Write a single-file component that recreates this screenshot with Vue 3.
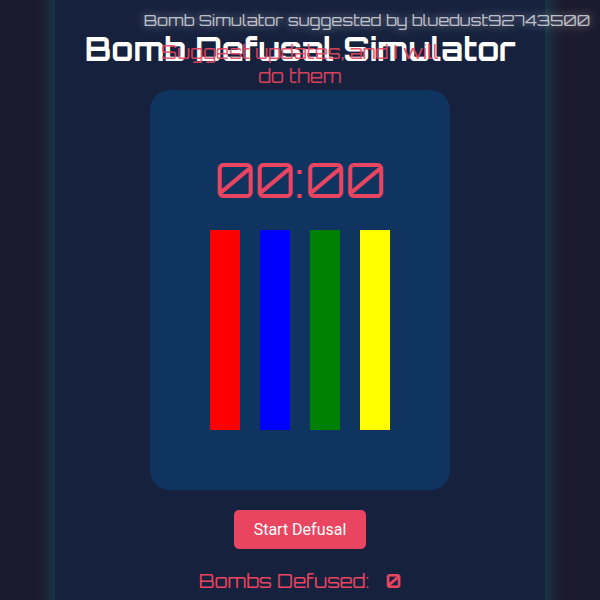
<script setup>
import { ref } from 'vue'

const wires = ref([
  { color: 'red', cut: false },
  { color: 'blue', cut: false },
  { color: 'green', cut: false },
  { color: 'yellow', cut: false },
])
const timer = ref('00:00')
const defused = ref(0)
</script>

<template>
  <div class="page">
    <p class="credit">Bomb Simulator suggested by bluedust92743500</p>
    <main class="game">
      <h1 class="title">Bomb Defusal Simulator</h1>
      <section class="bomb">
        <p class="notice">Suggest updates, and I will do them</p>
        <div class="timer">{{ timer }}</div>
        <div class="wires">
          <button
            v-for="wire in wires"
            :key="wire.color"
            type="button"
            class="wire"
            :class="wire.color"
            :aria-label="wire.color"
          ></button>
        </div>
      </section>
      <button type="button" class="start">Start Defusal</button>
      <p class="score">
        <span>Bombs Defused:</span>
        <strong class="count">{{ defused }}</strong>
      </p>
    </main>
  </div>
</template>

<style>
body {
  margin: 0;
  background: #1c1a2d;
}
</style>

<style scoped>
.page {
  position: relative;
  display: flex;
  justify-content: center;
  height: 100vh;
  overflow: hidden;
  background: #1c1a2d;
  font-family: Orbitron, "DejaVu Sans", sans-serif;
  color: #fff;
}

.credit {
  position: absolute;
  top: 8px;
  right: 10px;
  z-index: 2;
  margin: 0;
  font-size: 16px;
  line-height: 24px;
  white-space: nowrap;
  color: rgba(255, 255, 255, 0.7);
  text-shadow: 0 0 10px rgba(255, 255, 255, 0.5);
}

.game {
  display: flex;
  flex-direction: column;
  align-items: center;
  flex: 0 1 490px;
  box-sizing: border-box;
  margin: -40px 0;
  padding: 68px 20px 40px;
  background: #16213e;
  box-shadow: 0 0 20px rgba(0, 255, 255, 0.25);
}

.title {
  margin: 0 0 20px;
  font-size: 32px;
  font-weight: 700;
  line-height: 42px;
  white-space: nowrap;
}

.bomb {
  position: relative;
  display: flex;
  flex-direction: column;
  align-items: center;
  justify-content: center;
  gap: 20px;
  flex: none;
  width: 300px;
  height: 400px;
  border-radius: 20px;
  background: #0f3460;
}

.notice {
  position: absolute;
  bottom: 100%;
  left: 0;
  width: 100%;
  margin: 0 0 2px;
  font-size: 19px;
  line-height: 24px;
  text-align: center;
  color: #e94560;
  opacity: 0.9;
}

.timer {
  font-size: 48px;
  line-height: 60px;
  color: #e94560;
}

.wires {
  display: flex;
  gap: 20px;
}

.wire {
  width: 30px;
  height: 200px;
  padding: 0;
  border: 0;
  cursor: pointer;
}

.red {
  background: #f00;
}

.blue {
  background: #00f;
}

.green {
  background: #008000;
}

.yellow {
  background: #ff0;
}

.start {
  margin: 20px 0;
  padding: 10px 20px;
  border: 0;
  border-radius: 5px;
  background: #e94560;
  font-family: Roboto, sans-serif;
  font-size: 16px;
  line-height: 19px;
  color: #fff;
  cursor: pointer;
}

.score {
  display: flex;
  align-items: center;
  gap: 16px;
  margin: 0;
  font-size: 19px;
  line-height: 24px;
  color: #e94560;
}

.count {
  font-weight: 700;
}
</style>
